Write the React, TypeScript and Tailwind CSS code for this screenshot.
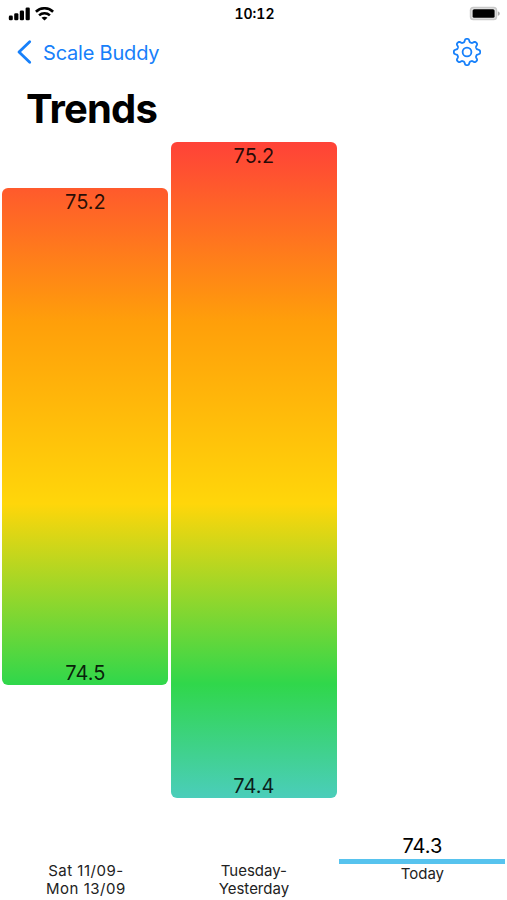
import React from 'react';

interface Trend {
  id: string;
  high?: string;
  low: string;
  label: string[];
  barClass: string;
  columnClass: string;
  labelClass: string;
}

const trends: Trend[] = [
  {
    id: 'sat-mon',
    high: '75.2',
    low: '74.5',
    label: ['Sat 11/09-', 'Mon 13/09'],
    columnClass: 'pt-[46px]',
    barClass:
      'h-[497px] rounded-md bg-[linear-gradient(to_bottom,#ff4238_-46px,#ff9f0a_134px,#ffd60a_316px,#30d74b_496px,#5ac8fa_675px)]',
    labelClass: 'pl-px tracking-[0.5px]',
  },
  {
    id: 'tue-yesterday',
    high: '75.2',
    low: '74.4',
    label: ['Tuesday-', 'Yesterday'],
    columnClass: '',
    barClass:
      'h-[656px] rounded-md bg-[linear-gradient(to_bottom,#ff4238_0px,#ff9f0a_180px,#ffd60a_362px,#30d74b_542px,#5ac8fa_721px)]',
    labelClass: 'tracking-[0px]',
  },
  {
    id: 'today',
    low: '74.3',
    label: ['Today'],
    columnClass: 'pt-[692px]',
    barClass: 'mt-px h-[5px] bg-[#57c3ee]',
    labelClass: 'tracking-[0px]',
  },
];

// Outline of a cog with eight rounded teeth
const gearPath = Array.from({ length: 160 }, (_, i) => {
  const angle = (i / 160) * Math.PI * 2;
  const radius = 11.6 + 1.6 * Math.tanh(1.9 * Math.cos(angle * 8));
  const x = 15 + radius * Math.sin(angle);
  const y = 15 - radius * Math.cos(angle);
  return `${i === 0 ? 'M' : 'L'}${x.toFixed(2)} ${y.toFixed(2)}`;
}).join(' ') + 'Z';

const StatusBar: React.FC = () => (
  <div className="grid h-7 grid-cols-3 items-center pl-2 pr-1.5">
    <div className="flex items-center gap-[5px]">
      <svg width="22" height="14" viewBox="0 0 22 14">
        <rect x="0.8" y="8.6" width="4" height="4.6" rx="1.3" />
        <rect x="6.2" y="6.3" width="4.2" height="6.9" rx="1.3" />
        <rect x="11.8" y="3.4" width="4.2" height="9.8" rx="1.3" />
        <rect x="17.6" y="0.5" width="4.2" height="12.7" rx="1.3" />
      </svg>
      <svg width="19" height="14" viewBox="0 0 19 14" fill="none" stroke="currentColor" strokeWidth="2.6">
        <path d="M0.9 4.8C5.8 0.1 13.2 0.1 18.1 4.8" />
        <path d="M4.1 8.4C7.1 5.6 11.9 5.6 14.9 8.4" />
        <path d="M9.5 13.6L6.5 10.7C8 9.3 11 9.3 12.5 10.7Z" fill="currentColor" stroke="none" />
      </svg>
    </div>
    <span className="text-center text-[14px] font-semibold leading-none tabular-nums">10:12</span>
    <svg className="justify-self-end" width="32" height="16" viewBox="0 0 32 16">
      <rect x="0.8" y="0.8" width="27.4" height="13.4" rx="3.5" fill="#c9c9c9" />
      <rect x="2.3" y="2.3" width="24.4" height="10.4" rx="2.2" fill="#e4e4e4" />
      <rect x="3.6" y="3.2" width="22" height="8.6" rx="1.6" fill="#000" />
      <path d="M28.8 5.2C31.4 6 31.4 9 28.8 9.8Z" fill="#aaa" />
    </svg>
  </div>
);

const NavBar: React.FC = () => (
  <nav className="flex h-12 items-center justify-between pl-4 pr-[25.5px] text-[#1780fa]">
    <button className="flex items-center gap-[11px]">
      <svg width="16" height="26" viewBox="0 0 16 26" fill="none" stroke="currentColor" strokeWidth="2.8" strokeLinecap="round" strokeLinejoin="round">
        <path d="M13.7 2.8L3 13L13.7 23.2" />
      </svg>
      <span className="pt-px text-[20px] leading-none tracking-[-0.2px]">Scale Buddy</span>
    </button>
    <button aria-label="Settings">
      <svg width="30" height="30" viewBox="0 0 30 30" fill="none" stroke="currentColor" strokeWidth="1.8" strokeLinejoin="round">
        <path d={gearPath} />
        <circle cx="15" cy="15" r="4.4" />
      </svg>
    </button>
  </nav>
);

const TrendColumn: React.FC<{ trend: Trend }> = ({ trend }) => (
  <div className={`flex flex-col text-center ${trend.columnClass}`}>
    {!trend.high && <span className="text-[20px] leading-6">{trend.low}</span>}
    <div className={`flex flex-col justify-between text-[20px] leading-6 text-black/85 ${trend.barClass}`}>
      {trend.high && (
        <>
          <span className="pt-[2px]">{trend.high}</span>
          <span>{trend.low}</span>
        </>
      )}
    </div>
    <div
      className={`text-[15px] leading-[18px] text-[#222] ${trend.high ? 'mt-auto' : 'mt-px'} ${trend.labelClass}`}
    >
      {trend.label.map((line) => (
        <p key={line}>{line}</p>
      ))}
    </div>
  </div>
);

const App: React.FC = () => {
  return (
    <div className="flex h-[900px] w-[507px] flex-col overflow-hidden bg-white font-['Inter',sans-serif] text-black">
      <StatusBar />
      <NavBar />
      <h1 className="h-[66px] pl-[26px] pt-[9px] text-[40px] font-bold leading-[48px] tracking-[-0.85px]">Trends</h1>
      <main className="grid flex-1 grid-cols-3 gap-[2.5px] pb-[2px] pl-[2.4px] pr-[1.6px]">
        {trends.map((trend) => (
          <TrendColumn key={trend.id} trend={trend} />
        ))}
      </main>
    </div>
  );
};

export default App;
